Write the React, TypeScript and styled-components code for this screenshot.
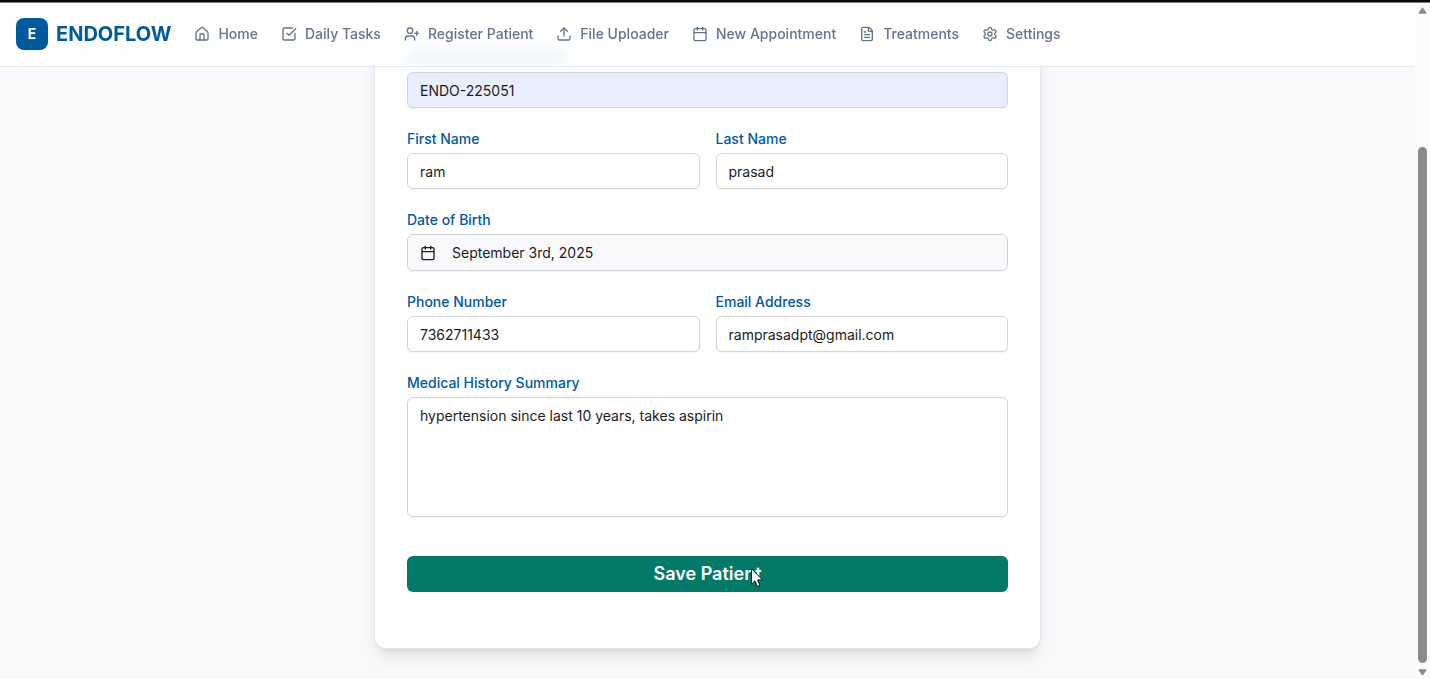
import React from 'react';
import styled, { createGlobalStyle } from 'styled-components';
import {
  Calendar,
  FileText,
  House,
  Settings,
  SquareCheckBig,
  Upload,
  UserPlus,
} from 'lucide-react';

const GlobalStyle = createGlobalStyle`
  *, *::before, *::after { box-sizing: border-box; }
  body {
    margin: 0;
    background: #f9f9fb;
    color: #1c1c1c;
    font-family: Inter, "Liberation Sans", sans-serif;
    font-size: 14px;
    line-height: 20px;
  }
  input, textarea, button { font: inherit; color: inherit; }
`;

const Shell = styled.div`
  display: flex;
  min-height: 100vh;
`;

const TopEdge = styled.div`
  position: fixed;
  z-index: 4;
  inset: 0 0 auto;
  height: 3px;
  background: #0c0909;
  border-bottom: 1px solid #7d7b7b;
`;

const Page = styled.div`
  flex: 1;
  min-width: 0;
`;

const Header = styled.header`
  position: fixed;
  z-index: 2;
  inset: 3px 15px auto 0;
  display: flex;
  align-items: center;
  gap: 23px;
  height: 64px;
  padding: 0 16px 1px;
  background: rgba(255, 255, 255, 0.8);
  backdrop-filter: blur(8px);
  border-bottom: 1px solid #e2e8f0;
`;

const Brand = styled.a`
  display: flex;
  align-items: center;
  gap: 8px;
  color: #005a9c;
  font-size: 20px;
  font-weight: 700;
  line-height: 28px;
  text-decoration: none;
`;

const BrandMark = styled.span`
  display: grid;
  place-items: center;
  width: 32px;
  height: 32px;
  border-radius: 8px;
  background: #005a9c;
  color: #fff;
  font-size: 14px;
`;

const Nav = styled.nav`
  display: flex;
  gap: 23px;
`;

const NavLink = styled.a`
  display: flex;
  align-items: center;
  gap: 8px;
  color: #64748b;
  font-weight: 500;
  text-decoration: none;
  white-space: nowrap;
`;

const Card = styled.main`
  width: calc(100% - 32px);
  max-width: 667px;
  margin: 0 auto 30px;
  padding: 48px 32px 56px;
  background: #fff;
  border: 1px solid #e2e8f0;
  border-top: 0;
  border-radius: 0 0 12px 12px;
  box-shadow: 0 10px 15px -3px rgba(0, 0, 0, 0.1), 0 4px 6px -4px rgba(0, 0, 0, 0.1);
`;

const Form = styled.form`
  display: flex;
  flex-direction: column;
  gap: 24px;
`;

const CoveredLabel = styled.div`
  width: 160px;
  height: 16px;
  border-radius: 2px;
  background: #b4d0e3;
`;

const Columns = styled.div`
  display: grid;
  grid-template-columns: 1fr 1fr;
  gap: 16px;
`;

const FieldBox = styled.div`
  display: flex;
  flex-direction: column;
  gap: 8px;
  min-width: 0;
`;

const Label = styled.label`
  color: #005a9c;
  font-weight: 500;
  line-height: 13px;
`;

const Input = styled.input<{ $filled?: boolean }>`
  width: 100%;
  height: 36px;
  padding: 0 12px;
  border: 1px solid #d3d5dc;
  border-radius: 6px;
  background: ${(p) => (p.$filled ? '#e8eefc' : '#fff')};
  box-shadow: 0 1px 2px rgba(0, 0, 0, 0.05);
  outline: none;
`;

const DateButton = styled.button`
  display: flex;
  align-items: center;
  gap: 16px;
  width: 100%;
  height: 37px;
  padding: 0 12px;
  border: 1px solid #d3d5dc;
  border-radius: 6px;
  background: #f9f9fb;
  box-shadow: 0 1px 2px rgba(0, 0, 0, 0.05);
`;

const TextArea = styled.textarea`
  display: block;
  width: 100%;
  height: 120px;
  padding: 8px 12px;
  border: 1px solid #d3d5dc;
  border-radius: 6px;
  background: #fff;
  box-shadow: 0 1px 2px rgba(0, 0, 0, 0.05);
  outline: none;
  resize: none;
`;

const SaveButton = styled.button`
  position: relative;
  height: 36px;
  margin-top: 15px;
  border: 0;
  border-radius: 6px;
  background: #037a68;
  color: #fff;
  font-size: 18px;
  font-weight: 600;
`;

const Pointer = styled.svg`
  position: absolute;
  top: 12px;
  left: calc(50% + 43px);
`;

const Rail = styled.div`
  position: sticky;
  top: 0;
  display: grid;
  grid-template-rows: 14px 130fr 516fr 3fr 13px;
  justify-items: center;
  width: 15px;
  height: 100vh;
  padding-top: 3px;
  background: #fcfcfc;
`;

const Thumb = styled.div`
  grid-row: 3;
  width: 9px;
  border-radius: 5px;
  background: #8b8b8b;
`;

const Arrow = styled.svg<{ $down?: boolean }>`
  grid-row: ${(p) => (p.$down ? 5 : 1)};
  align-self: center;
`;

const links = [
  { text: 'Home', Icon: House },
  { text: 'Daily Tasks', Icon: SquareCheckBig },
  { text: 'Register Patient', Icon: UserPlus },
  { text: 'File Uploader', Icon: Upload },
  { text: 'New Appointment', Icon: Calendar },
  { text: 'Treatments', Icon: FileText },
  { text: 'Settings', Icon: Settings },
];

type FieldProps = { id: string; label: string; value: string; type?: string };

function Field({ id, label, value, type = 'text' }: FieldProps) {
  return (
    <FieldBox>
      <Label htmlFor={id}>{label}</Label>
      <Input id={id} type={type} defaultValue={value} />
    </FieldBox>
  );
}

export default function App() {
  return (
    <>
      <GlobalStyle />
      <TopEdge />
      <Shell>
        <Page>
          <Header>
            <Brand href="#">
              <BrandMark>E</BrandMark>
              ENDOFLOW
            </Brand>
            <Nav>
              {links.map(({ text, Icon }) => (
                <NavLink href="#" key={text}>
                  <Icon size={16} strokeWidth={2} />
                  {text}
                </NavLink>
              ))}
            </Nav>
          </Header>
          <Card>
            <Form onSubmit={(e) => e.preventDefault()}>
              <FieldBox>
                <CoveredLabel />
                <Input $filled aria-label="Patient ID" defaultValue="ENDO-225051" />
              </FieldBox>
              <Columns>
                <Field id="first" label="First Name" value="ram" />
                <Field id="last" label="Last Name" value="prasad" />
              </Columns>
              <FieldBox>
                <Label htmlFor="dob">Date of Birth</Label>
                <DateButton id="dob" type="button">
                  <Calendar size={16} />
                  September 3rd, 2025
                </DateButton>
              </FieldBox>
              <Columns>
                <Field id="phone" label="Phone Number" value="7362711433" type="tel" />
                <Field id="email" label="Email Address" value="ramprasadpt@gmail.com" type="email" />
              </Columns>
              <FieldBox>
                <Label htmlFor="history">Medical History Summary</Label>
                <TextArea id="history" defaultValue="hypertension since last 10 years, takes aspirin" />
              </FieldBox>
              <SaveButton type="submit">
                Save Patient
                <Pointer width="13" height="20" viewBox="0 0 13 20" aria-hidden="true">
                  <path
                    d="M.5.8v15.4l3.5-3.4 2.4 5.7 2.6-1.1-2.4-5.5h5z"
                    fill="#fff"
                    stroke="#111"
                    strokeWidth="1"
                  />
                </Pointer>
              </SaveButton>
            </Form>
          </Card>
        </Page>
        <Rail aria-hidden="true">
          <Arrow width="9" height="7" viewBox="0 0 9 7">
            <path d="M4.5.8 8.2 6.2H.8z" fill="#8b8b8b" stroke="#8b8b8b" strokeLinejoin="round" />
          </Arrow>
          <Thumb />
          <Arrow $down width="9" height="7" viewBox="0 0 9 7">
            <path d="M4.5 6.2.8.8h7.4z" fill="#8b8b8b" stroke="#8b8b8b" strokeLinejoin="round" />
          </Arrow>
        </Rail>
      </Shell>
    </>
  );
}
